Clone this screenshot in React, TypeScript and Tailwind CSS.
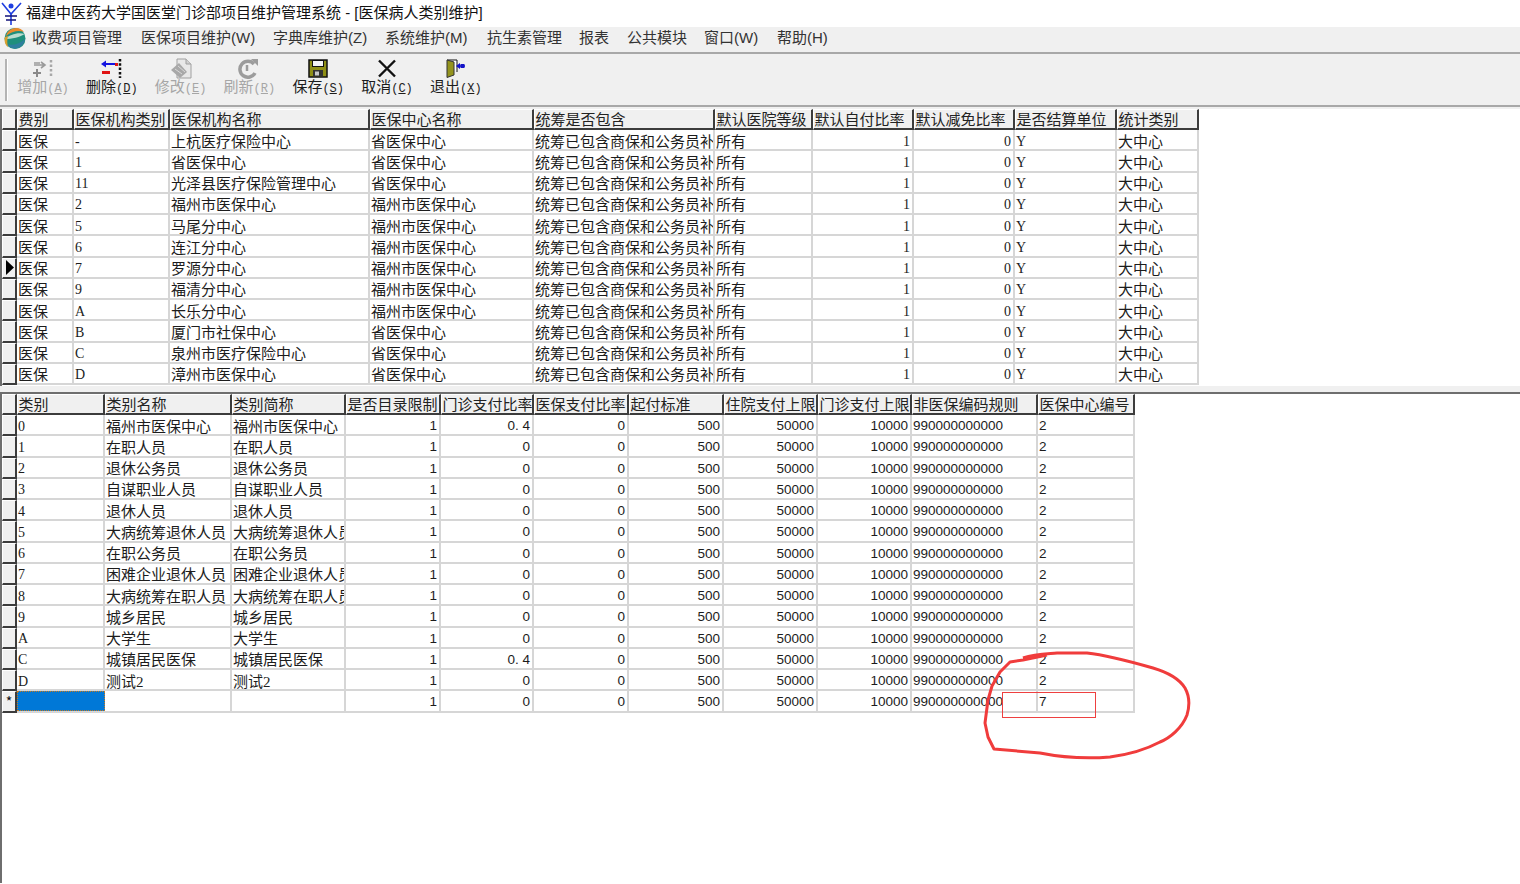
import type { ReactNode } from 'react';

const cellFont = "font-['Liberation_Serif','Noto_Sans_CJK_SC',serif]";
const monoFont = "font-['Liberation_Mono','Noto_Sans_CJK_SC',monospace]";
const sansFont = "font-['Liberation_Sans','Noto_Sans_CJK_SC',sans-serif]";

const topCols = 'grid-cols-[15px_57px_96px_200px_164px_181px_98px_101px_101px_102px_82px]';
const bottomCols = 'grid-cols-[15px_88px_127px_114px_95px_93px_95px_95px_94px_94px_126px_97px]';

const topHeaders = ['费别', '医保机构类别', '医保机构名称', '医保中心名称', '统筹是否包含', '默认医院等级', '默认自付比率', '默认减免比率', '是否结算单位', '统计类别'];
const bottomHeaders = ['类别', '类别名称', '类别简称', '是否目录限制', '门诊支付比率', '医保支付比率', '起付标准', '住院支付上限', '门诊支付上限', '非医保编码规则', '医保中心编号'];

const topRows = [
  ['-', '上杭医疗保险中心', '省医保中心'],
  ['1', '省医保中心', '省医保中心'],
  ['11', '光泽县医疗保险管理中心', '省医保中心'],
  ['2', '福州市医保中心', '福州市医保中心'],
  ['5', '马尾分中心', '福州市医保中心'],
  ['6', '连江分中心', '福州市医保中心'],
  ['7', '罗源分中心', '福州市医保中心'],
  ['9', '福清分中心', '福州市医保中心'],
  ['A', '长乐分中心', '福州市医保中心'],
  ['B', '厦门市社保中心', '省医保中心'],
  ['C', '泉州市医疗保险中心', '省医保中心'],
  ['D', '漳州市医保中心', '省医保中心'],
];

const bottomRows = [
  ['0', '福州市医保中心', '福州市医保中心', '0. 4'],
  ['1', '在职人员', '在职人员', '0'],
  ['2', '退休公务员', '退休公务员', '0'],
  ['3', '自谋职业人员', '自谋职业人员', '0'],
  ['4', '退休人员', '退休人员', '0'],
  ['5', '大病统筹退休人员', '大病统筹退休人员', '0'],
  ['6', '在职公务员', '在职公务员', '0'],
  ['7', '困难企业退休人员', '困难企业退休人员', '0'],
  ['8', '大病统筹在职人员', '大病统筹在职人员', '0'],
  ['9', '城乡居民', '城乡居民', '0'],
  ['A', '大学生', '大学生', '0'],
  ['C', '城镇居民医保', '城镇居民医保', '0. 4'],
  ['D', '测试2', '测试2', '0'],
];

const menus = [
  { label: '收费项目管理', width: 'w-[109px]' },
  { label: '医保项目维护(W)', width: 'w-[132px]' },
  { label: '字典库维护(Z)', width: 'w-[112px]' },
  { label: '系统维护(M)', width: 'w-[102px]' },
  { label: '抗生素管理', width: 'w-[92px]' },
  { label: '报表', width: 'w-[48px]' },
  { label: '公共模块', width: 'w-[77px]' },
  { label: '窗口(W)', width: 'w-[73px]' },
  { label: '帮助(H)', width: 'w-[60px]' },
];

function TitleIcon() {
  return (
    <svg width="22" height="24" viewBox="0 0 22 24" className="shrink-0">
      <circle cx="10" cy="4" r="2.5" fill="#1f3fe0" />
      <path d="M1 1 L10 12 L20 1" fill="none" stroke="#1f3fe0" strokeWidth="1.6" />
      <path d="M10 11 V23" stroke="#1f3fe0" strokeWidth="1.6" />
      <path d="M4 14 H16 M5 18 H15" stroke="#12127a" strokeWidth="1.4" />
    </svg>
  );
}

function AppLogo() {
  return (
    <svg width="22" height="23" viewBox="0 0 22 23" className="shrink-0">
      <circle cx="11" cy="11.5" r="10.5" fill="#1f8f7c" />
      <path d="M2 9 C4 1 15 -2 20 5 C15 3 8 4 2 9 Z" fill="#ea8a2c" />
      <path d="M1 12 C5 8 14 5 20.500 7 C17 10 7 12 1 12 Z" fill="#b9dccf" />
      <path d="M3 17 C8 19 16 17 21 12 C20 19 14 22 10 21.500 C7 21 4.500 19.500 3 17 Z" fill="#2f7f9e" />
      <path d="M1 10 C0 14 1 18 4 20 C3 16 3 13 4 9 Z" fill="#d9a02e" />
    </svg>
  );
}

function AddIcon() {
  return (
    <svg width="24" height="19" viewBox="0 0 24 19">
      <path d="M3 6 H14 M10 3 L14 6 L10 9 M3 4 H9" fill="none" stroke="#9a9a9a" strokeWidth="1.600" />
      <path d="M2 14 H10 M6 10 V18" stroke="#8a8a8a" strokeWidth="2" />
      <path d="M20 1 V18" stroke="#a8a8a8" strokeWidth="2.500" strokeDasharray="2.500 2" />
    </svg>
  );
}

function DeleteIcon() {
  return (
    <svg width="24" height="19" viewBox="0 0 24 19">
      <path d="M4 5 H15" stroke="#1414e0" strokeWidth="2" />
      <path d="M1 5 L6 1.500 V8.500 Z" fill="#1414e0" />
      <rect x="15" y="4" width="3" height="3" fill="#e01414" />
      <rect x="2" y="12" width="8" height="3" fill="#e01414" />
      <path d="M20 0 V19" stroke="#111" strokeWidth="2.500" strokeDasharray="2.500 1.800" />
    </svg>
  );
}

function EditIcon() {
  return (
    <svg width="24" height="21" viewBox="0 0 24 21">
      <path d="M8 1 H17 L22 6 V20 H8 Z" fill="#e8e8e8" stroke="#a0a0a0" />
      <path d="M17 1 V6 H22" fill="#d0d0d0" stroke="#a0a0a0" />
      <path d="M2 12 L10 5 L18 14 L11 20 Z" fill="#a8a8a8" />
      <path d="M6 11 L13 16 M9 8 L16 14" stroke="#d8d8d8" />
    </svg>
  );
}

function RefreshIcon() {
  return (
    <svg width="22" height="21" viewBox="0 0 22 21">
      <path d="M16 6 A8 8 0 1 0 17 15" fill="none" stroke="#9c9c9c" strokeWidth="3.500" />
      <path d="M13 1 H20 V8 Z" fill="#9c9c9c" />
      <path d="M9 7 V13" stroke="#9c9c9c" strokeWidth="2.500" />
    </svg>
  );
}

function SaveIcon() {
  return (
    <svg width="20" height="19" viewBox="0 0 20 19">
      <rect x="1" y="1" width="18" height="17" fill="#8f8f14" stroke="#111" strokeWidth="1.500" />
      <rect x="4.500" y="1.500" width="11" height="6" fill="#f4f4f4" stroke="#111" />
      <rect x="5" y="11" width="10" height="6.500" fill="#333" />
      <rect x="7" y="12.500" width="4" height="4" fill="#c8c8c8" />
    </svg>
  );
}

function CancelIcon() {
  return (
    <svg width="20" height="19" viewBox="0 0 20 19">
      <path d="M2 1.500 L18 17.500 M18 1.500 L2 17.500" stroke="#111" strokeWidth="2.400" />
    </svg>
  );
}

function ExitIcon() {
  return (
    <svg width="20" height="19" viewBox="0 0 20 19">
      <path d="M1 1 H11 V13" fill="#fff" stroke="#111" />
      <path d="M1 1 L8 3 V16 L1 18.500 Z" fill="#94941e" stroke="#333" />
      <path d="M11 7 H19" stroke="#1414c8" strokeWidth="1.500" />
      <path d="M10 7 L14 4 V10 Z" fill="#1414c8" />
      <rect x="14.500" y="5" width="4" height="4" fill="#1414c8" />
    </svg>
  );
}

function ToolButton({ icon, name, hotkey, disabled }: { icon: ReactNode; name: string; hotkey: string; disabled?: boolean }) {
  return (
    <div className="flex w-[52px] shrink-0 flex-col items-center">
      <div className="flex h-[20px] items-center">{icon}</div>
      <div className={`mt-[2px] whitespace-nowrap text-[15px] leading-[18px] ${monoFont} ${disabled ? 'text-[#a6a6a6]' : 'text-[#1c1c1c]'}`}>
        {name}
        <span className="text-[12px]">
          (<span className="underline">{hotkey}</span>)
        </span>
      </div>
    </div>
  );
}

function HeaderCell({ children }: { children?: ReactNode }) {
  return (
    <div className={`h-[21px] overflow-hidden whitespace-nowrap border-t border-l border-r-2 border-b-2 border-t-white border-l-white border-r-[#3c3c3c] border-b-[#3c3c3c] bg-[#f0f0f0] pl-[0.500px] pt-[2px] text-[15px] leading-[17px] text-[#222] ${cellFont}`}>
      {children}
    </div>
  );
}

function RowMarker({ children }: { children?: ReactNode }) {
  return (
    <div className="flex h-[21.25px] items-center justify-center border-t border-l border-r-2 border-b-2 border-t-white border-l-white border-r-[#3c3c3c] border-b-[#3c3c3c] bg-[#f0f0f0] text-[14px] leading-none text-[#111]">
      {children}
    </div>
  );
}

function Cell({ children, right, sans, cjk }: { children?: ReactNode; right?: boolean; sans?: boolean; cjk?: boolean }) {
  return (
    <div
      className={`h-[21.25px] overflow-hidden whitespace-nowrap border-r-2 border-b-2 border-[#d6d6d6] bg-white leading-[19px] text-[#1c1c1c] ${right ? 'text-right' : ''} ${sans ? `${sansFont} pl-[1px] pr-[2px] pt-[1px] text-[13.500px]` : `${cellFont} ${right ? 'pr-[2px]' : 'pl-[1px]'} ${cjk ? 'pt-[2.500px] text-[15px]' : 'pt-[1.500px] text-[14px]'}`}`}
    >
      {children}
    </div>
  );
}

function TopGrid() {
  return (
    <div className={`grid w-fit ${topCols}`}>
      <HeaderCell />
      {topHeaders.map((h) => (
        <HeaderCell key={h}>{h}</HeaderCell>
      ))}
      {topRows.map((r, i) => (
        <div key={r[0]} className="contents">
          <RowMarker>
            {i === 6 && (
              <svg width="9" height="15" viewBox="0 0 9 15">
                <path d="M1 0 L9 7.500 L1 15 Z" fill="#000" />
              </svg>
            )}
          </RowMarker>
          <Cell cjk>医保</Cell>
          <Cell>{r[0]}</Cell>
          <Cell cjk>{r[1]}</Cell>
          <Cell cjk>{r[2]}</Cell>
          <Cell cjk>统筹已包含商保和公务员补</Cell>
          <Cell cjk>所有</Cell>
          <Cell right>1</Cell>
          <Cell right>0</Cell>
          <Cell>Y</Cell>
          <Cell cjk>大中心</Cell>
        </div>
      ))}
    </div>
  );
}

function BottomRowTail({ ratio, code }: { ratio: string; code: string }) {
  return (
    <>
      <Cell right sans>1</Cell>
      <Cell right sans>{ratio}</Cell>
      <Cell right sans>0</Cell>
      <Cell right sans>500</Cell>
      <Cell right sans>50000</Cell>
      <Cell right sans>10000</Cell>
      <Cell sans>990000000000</Cell>
      <Cell sans>{code}</Cell>
    </>
  );
}

function BottomGrid() {
  return (
    <div className={`grid w-fit ${bottomCols}`}>
      <HeaderCell />
      {bottomHeaders.map((h) => (
        <HeaderCell key={h}>{h}</HeaderCell>
      ))}
      {bottomRows.map((r) => (
        <div key={r[0]} className="contents">
          <RowMarker />
          <Cell>{r[0]}</Cell>
          <Cell cjk>{r[1]}</Cell>
          <Cell cjk>{r[2]}</Cell>
          <BottomRowTail ratio={r[3]} code="2" />
        </div>
      ))}
      <RowMarker>*</RowMarker>
      <div className="h-[21.25px] border-b-2 border-[#d6d6d6]">
        <div className="h-[19.25px] border border-dotted border-[#c77a1e] bg-[#0078d7]" />
      </div>
      <Cell />
      <Cell />
      <BottomRowTail ratio="0" code="7" />
    </div>
  );
}

export default function App() {
  return (
    <div className="relative h-[884px] w-[1520px] overflow-hidden bg-white font-['Noto_Sans_CJK_SC',sans-serif]">
      {/* Title bar */}
      <div className={`flex h-[27px] items-center bg-white pl-[1px] text-[15px] text-[#111] ${sansFont}`}>
        <TitleIcon />
        <span className="ml-[3px]">福建中医药大学国医堂门诊部项目维护管理系统 - [医保病人类别维护]</span>
      </div>

      {/* Menu bar */}
      <div className={`flex h-[25px] items-center bg-[#f0f0f0] pb-[2px] pl-[4px] text-[15px] text-[#333] ${sansFont}`}>
        <AppLogo />
        <div className="ml-[6px] flex whitespace-nowrap">
          {menus.map((m) => (
            <span key={m.label} className={m.width}>
              {m.label}
            </span>
          ))}
        </div>
      </div>

      {/* Toolbar */}
      <div className="border-t-2 border-[#a8a8a8] bg-[#f0f0f0]">
        <div className="flex h-[51px] pt-[4px]">
          <div className="ml-[5px] mr-[9px] mt-[1px] h-[42px] w-[3px] border-l-2 border-r border-l-[#b4b4b4] border-r-white" />
          <div className="flex gap-[16.800px]">
            <ToolButton icon={<AddIcon />} name="增加" hotkey="A" disabled />
            <ToolButton icon={<DeleteIcon />} name="删除" hotkey="D" />
            <ToolButton icon={<EditIcon />} name="修改" hotkey="E" disabled />
            <ToolButton icon={<RefreshIcon />} name="刷新" hotkey="R" disabled />
            <ToolButton icon={<SaveIcon />} name="保存" hotkey="S" />
            <ToolButton icon={<CancelIcon />} name="取消" hotkey="C" />
            <ToolButton icon={<ExitIcon />} name="退出" hotkey="X" />
          </div>
        </div>
      </div>

      {/* Master grid */}
      <div className="h-[281px] border-t-2 border-b-2 border-t-[#a8a8a8] border-b-[#d6d6d6] bg-white">
        <div className="h-[2px] bg-[#f0f0f0]" />
        <div className="h-[277px] border-l-2 border-[#6e6e6e] bg-white">
          <TopGrid />
        </div>
      </div>

      {/* Splitter */}
      <div className="h-[6px] bg-[#f0f0f0]" />

      {/* Detail grid */}
      <div className="h-[491px] border-t-2 border-l-2 border-[#6e6e6e] bg-white">
        <BottomGrid />
      </div>

      {/* Hand-drawn annotation on top of the screenshot */}
      <svg width="1520" height="884" viewBox="0 0 1520 884" className="pointer-events-none absolute left-0 top-0">
        <path
          d="M1023 658 C1035 654 1045 654 1057 653 L1087 653 C1105 655 1125 660 1153 668 C1170 673 1180 680 1185 688 C1190 697 1190 705 1187 715 C1182 728 1170 738 1160 742 C1145 750 1125 755 1110 757 C1085 759 1060 757 1040 753 L994 749 L988 737 L985 723 L988 700 L992 686 L1000 672 L1010 662 L1023 660 L1047 655"
          fill="none"
          stroke="#f03c3c"
          strokeWidth="3"
          strokeLinejoin="round"
        />
        <rect x="1002.500" y="692.500" width="93" height="25" fill="none" stroke="#ee4040" />
      </svg>
    </div>
  );
}
